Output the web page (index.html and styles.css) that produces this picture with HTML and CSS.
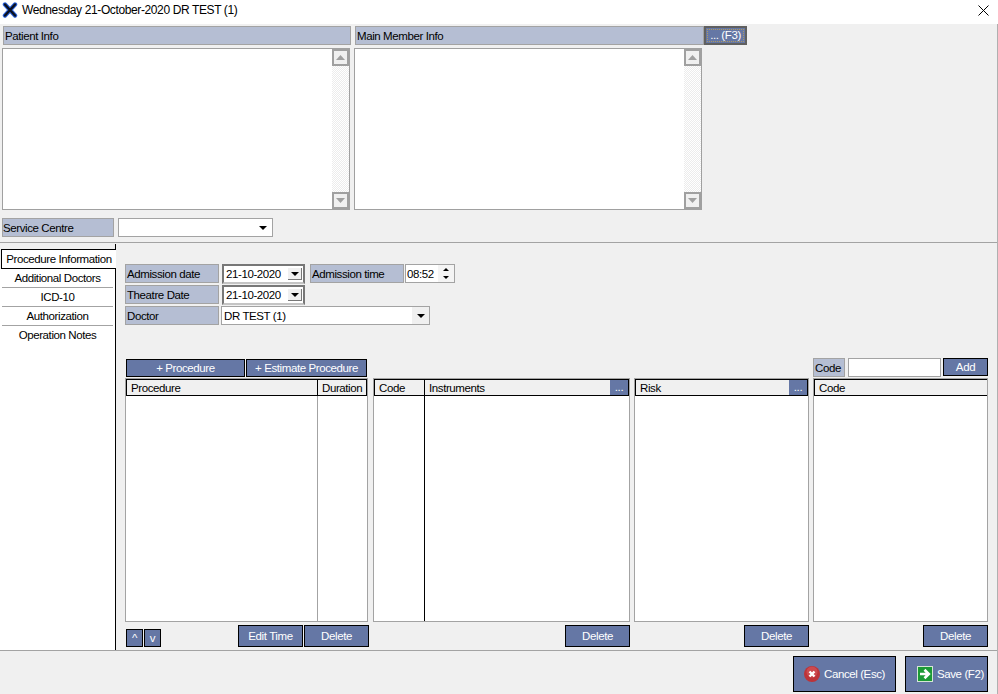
FILE: index.html
```html
<!DOCTYPE html>
<html>
<head>
<meta charset="utf-8">
<title>Wednesday 21-October-2020 DR TEST (1)</title>
<link rel="stylesheet" href="styles.css">
</head>
<body>
<div class="window">
  <header class="titlebar">
    <svg class="app-icon" width="16" height="16" viewBox="0 0 16 16"><path d="M3 2.5L13 13.5M13 2.5L3 13.5" stroke="#2a62d8" stroke-width="4.4" stroke-linecap="round"/><path d="M3 2.5L13 13.5M13 2.5L3 13.5" stroke="#0a1020" stroke-width="2.4" stroke-linecap="round"/></svg>
    <span class="title-text">Wednesday 21-October-2020 DR TEST (1)</span>
    <svg class="close-icon" width="11" height="11" viewBox="0 0 11 11"><path d="M.5.5L10.5 10.5M10.5.5L.5 10.5" stroke="#000" fill="none"/></svg>
  </header>

  <section class="info-heads">
    <div class="label info-head-a">Patient Info</div>
    <div class="label info-head-b">Main Member Info</div>
    <button class="btn btn-f3"><span class="focus">... (F3)</span></button>
  </section>
  <section class="info-boxes">
    <div class="memo">
      <div class="scrollbar">
        <span class="sb-btn"><svg width="9" height="5" viewBox="0 0 9 5"><path d="M4.5 0L9 5H0z" fill="#a0a0a0"/></svg></span>
        <span class="sb-track"></span>
        <span class="sb-btn"><svg width="9" height="5" viewBox="0 0 9 5"><path d="M0 0H9L4.5 5z" fill="#a0a0a0"/></svg></span>
      </div>
    </div>
    <div class="memo">
      <div class="scrollbar">
        <span class="sb-btn"><svg width="9" height="5" viewBox="0 0 9 5"><path d="M4.5 0L9 5H0z" fill="#a0a0a0"/></svg></span>
        <span class="sb-track"></span>
        <span class="sb-btn"><svg width="9" height="5" viewBox="0 0 9 5"><path d="M0 0H9L4.5 5z" fill="#a0a0a0"/></svg></span>
      </div>
    </div>
  </section>

  <section class="service-row">
    <div class="label service-label">Service Centre</div>
    <div class="combo service-combo"><span class="combo-text"></span><span class="arrow-cell"><i class="arrow"></i></span></div>
  </section>

  <main class="main">
    <nav class="tabs">
      <div class="tab tab-active">Procedure Information</div>
      <div class="tab-list">
        <div class="tab">Additional Doctors</div>
        <div class="tab">ICD-10</div>
        <div class="tab">Authorization</div>
        <div class="tab">Operation Notes</div>
      </div>
    </nav>

    <div class="content">
      <div class="form">
        <div class="form-row">
          <div class="label form-label">Admission date</div>
          <div class="date-field"><span class="date-text">21-10-2020</span><span class="date-btn"><i class="arrow"></i></span></div>
          <div class="label time-label">Admission time</div>
          <div class="time-field"><span class="time-text">08:52</span>
            <span class="spin"><i class="arrow-up"></i><i class="arrow-down"></i></span>
          </div>
        </div>
        <div class="form-row">
          <div class="label form-label">Theatre Date</div>
          <div class="date-field"><span class="date-text">21-10-2020</span><span class="date-btn"><i class="arrow"></i></span></div>
        </div>
        <div class="form-row">
          <div class="label form-label">Doctor</div>
          <div class="combo doctor-combo"><span class="combo-text">DR TEST (1)</span><span class="arrow-cell"><i class="arrow"></i></span></div>
        </div>
      </div>

      <div class="toolbar">
        <button class="btn btn-proc">+ Procedure</button>
        <button class="btn btn-est">+ Estimate Procedure</button>
        <div class="label code-label">Code</div>
        <div class="code-input"></div>
        <button class="btn btn-add">Add</button>
      </div>

      <div class="grids">
        <div class="grid grid-proc">
          <div class="grid-head">
            <div class="th th-proc">Procedure</div>
            <div class="th th-dur">Duration</div>
          </div>
          <div class="grid-body"><div class="col-line col-line-proc"></div></div>
        </div>
        <div class="grid grid-inst">
          <div class="grid-head">
            <div class="th th-code">Code</div>
            <div class="th th-fill">Instruments</div>
            <button class="btn-dots">...</button>
          </div>
          <div class="grid-body"><div class="col-line-dark"></div></div>
        </div>
        <div class="grid grid-risk">
          <div class="grid-head">
            <div class="th th-fill">Risk</div>
            <button class="btn-dots">...</button>
          </div>
          <div class="grid-body"></div>
        </div>
        <div class="grid grid-code">
          <div class="grid-head grid-head-open">
            <div class="th th-fill">Code</div>
          </div>
          <div class="grid-body"></div>
        </div>
      </div>

      <div class="grid-actions">
        <div class="group group-proc">
          <button class="btn btn-small btn-up">^</button>
          <button class="btn btn-small">v</button>
          <span class="spacer"></span>
          <button class="btn btn-action">Edit Time</button>
          <button class="btn btn-action">Delete</button>
        </div>
        <div class="group group-inst"><button class="btn btn-action">Delete</button></div>
        <div class="group group-risk"><button class="btn btn-action">Delete</button></div>
        <div class="group group-code"><button class="btn btn-action">Delete</button></div>
      </div>
    </div>
  </main>

  <footer class="footer">
    <button class="btn btn-foot btn-cancel">
      <svg width="16" height="16" viewBox="0 0 16 16"><circle cx="8" cy="8" r="8" fill="#bd3339"/><circle cx="8" cy="6" r="5.5" fill="#d65a5f" opacity=".6"/><path d="M5.5 5.5L10.5 10.5M10.5 5.5L5.5 10.5" stroke="#fff" stroke-width="2.4"/></svg>
      <span>Cancel (Esc)</span>
    </button>
    <button class="btn btn-foot btn-save">
      <svg width="16" height="16" viewBox="0 0 16 16"><rect x=".5" y=".5" width="15" height="15" fill="#1c9a35" stroke="#d5e6d5"/><path d="M3 8H10M7.5 3.8L11.8 8L7.5 12.2" stroke="#fff" stroke-width="2.6" fill="none"/></svg>
      <span>Save (F2)</span>
    </button>
  </footer>
</div>
</body>
</html>
```

FILE: styles.css
```css
* { box-sizing: border-box; }
html, body { margin: 0; padding: 0; }
body { width: 998px; height: 694px; overflow: hidden; font-family: "Liberation Sans", Arial, sans-serif; font-size: 11.5px; letter-spacing: -0.4px; color: #000; }
.window { width: 998px; height: 694px; display: flex; flex-direction: column; background: #f0f0f0; border-right: 1px solid #b0b0b0; }

.titlebar { height: 24px; flex: none; background: #fff; display: flex; align-items: flex-start; padding: 2px 0 0 2px; margin-right: -1px; }
.app-icon { flex: none; }
.title-text { margin-left: 4px; font-size: 12px; line-height: 16px; letter-spacing: -0.38px; }
.close-icon { margin-left: auto; margin-right: 9px; margin-top: 3px; }

.label { background: #b5bed3; border: 1px solid #a3a3a3; height: 19px; line-height: 18px; padding-left: 1px; white-space: nowrap; overflow: hidden; }

.btn { font: inherit; letter-spacing: inherit; background: #6577a5; color: #fff; border: 1px solid #000; padding: 0; margin: 0; height: 19px; line-height: 15px; text-align: center; }

.info-heads { display: flex; margin-top: 2px; padding-left: 3px; }
.info-head-a { width: 348px; }
.info-head-b { width: 349px; margin-left: 4px; }
.btn-f3 { width: 43px; border: 2px solid #606060; padding: 1px; }
.focus { display: block; height: 13px; line-height: 11px; border: 1px dotted #b09a60; }

.info-boxes { display: flex; gap: 4px; margin-top: 3px; padding-left: 2px; }
.memo { width: 348px; height: 162px; background: #fff; border: 1px solid #a0a0a0; display: flex; justify-content: flex-end; }
.scrollbar { width: 17px; display: flex; flex-direction: column; }
.sb-btn { height: 17px; flex: none; background: #f0f0f0; border: 2px solid #a0a0a0; display: flex; align-items: center; justify-content: center; }
.sb-track { flex: 1; background-color: #fff; background-image: repeating-conic-gradient(#ececec 0 25%, #fff 0 50%); background-size: 2px 2px; }

.service-row { display: flex; margin-top: 8px; padding-left: 2px; }
.service-label { width: 112px; padding-left: 0; }
.combo { height: 19px; background: #fff; border: 1px solid #a3a3a3; display: flex; align-items: center; }
.service-combo { width: 155px; margin-left: 4px; }
.combo-text { flex: 1; padding-left: 2px; }
.arrow-cell { width: 17px; height: 17px; background: #f0f0f0; display: flex; align-items: center; justify-content: center; }
.service-combo .arrow-cell { background: #fff; margin-right: 1px; }
.arrow { display: block; width: 0; height: 0; border-left: 4px solid transparent; border-right: 4px solid transparent; border-top: 4px solid #000; }
.arrow-up { display: block; width: 0; height: 0; border-left: 3px solid transparent; border-right: 3px solid transparent; border-bottom: 3px solid #000; }
.arrow-down { display: block; width: 0; height: 0; border-left: 3px solid transparent; border-right: 3px solid transparent; border-top: 3px solid #000; }

.main { flex: none; height: 409px; margin-top: 5px; border-top: 1px solid #a3a3a3; border-bottom: 1px solid #a3a3a3; display: flex; }
.tabs { width: 116px; flex: none; padding-top: 1px; display: flex; flex-direction: column; }
.tabs::before { content: ""; display: block; height: 5px; width: 1px; background: #000; margin-left: 115px; flex: none; }
.tab { height: 19px; line-height: 18px; text-align: center; white-space: nowrap; }
.tab-active { height: 20px; line-height: 19px; margin-left: 1px; background: #fff; border: 1px solid #000; border-right: none; padding-left: 0; flex: none; }
.tab-list { flex: 1; background: #fff; border-right: 1px solid #000; padding: 0 2px; }
.tab-list .tab { border-bottom: 1px solid #a3a3a3; }
.tab-list .tab:last-child { border-bottom: none; }

.content { flex: 1; padding-left: 9px; padding-top: 21px; min-width: 0; }
.form-row { display: flex; height: 21px; }
.form-label { width: 94px; }
.date-field { width: 83px; height: 20px; margin-left: 3px; background: #fff; border: 2px solid; border-color: #777 #777 #c4c4c4 #777; display: flex; align-items: center; }
.date-text { flex: 1; padding-left: 2px; }
.date-btn { width: 14px; height: 12px; margin-right: 1px; background: #f0f0f0; border-right: 1px solid #777; border-bottom: 1px solid #777; display: flex; align-items: center; justify-content: center; }
.time-label { width: 94px; margin-left: 5px; }
.time-field { width: 50px; height: 19px; margin-left: 1px; background: #fff; border: 1px solid #a3a3a3; display: flex; align-items: center; padding-left: 1px; }
.time-text { flex: 1; }
.spin { width: 16px; display: flex; flex-direction: column; align-items: center; gap: 5px; background: #f4f4f4; height: 17px; justify-content: center; }
.doctor-combo { width: 209px; margin-left: 2px; }

.toolbar { display: flex; align-items: flex-start; margin-top: 31px; height: 20px; padding-left: 1px; }
.btn-proc { width: 119px; margin-top: 1px; height: 18px; }
.btn-est { width: 121px; margin-left: 1px; margin-top: 1px; height: 18px; }
.code-label { width: 32px; margin-left: auto; }
.code-input { width: 93px; height: 19px; margin-left: 3px; background: #fff; border: 1px solid #a3a3a3; }
.btn-add { width: 45px; height: 18px; margin-left: 2px; margin-right: 9px; }

.grids { display: flex; height: 244px; }
.grid { background: #fff; border: 1px solid #a3a3a3; display: flex; flex-direction: column; }
.grid-proc { width: 243px; }
.grid-inst { width: 257px; margin-left: 5px; }
.grid-risk { width: 175px; margin-left: 4px; }
.grid-code { width: 175px; margin-left: 4px; }
.grid-head { height: 17px; flex: none; display: flex; background: #f0f0f0; border: 1px solid #000; }
.grid-head-open { border-right: none; }
.th { height: 15px; line-height: 16px; padding-left: 4px; border-right: 1px solid #000; white-space: nowrap; }
.th-proc { width: 191px; }
.th-dur { flex: 1; border-right: none; padding-left: 4px; }
.th-code { width: 50px; }
.th-fill { flex: 1; border-right: none; }
.btn-dots { width: 18px; height: 15px; padding: 0; border: 0; background: #6577a5; color: #fff; font: inherit; letter-spacing: inherit; line-height: 15px; }
.grid-body { flex: 1; }
.col-line { width: 1px; height: 100%; background: #a3a3a3; margin-left: 191px; }
.col-line-dark { width: 1px; height: 100%; background: #000; margin-left: 50px; }

.grid-actions { display: flex; margin-top: 2px; padding-left: 1px; }
.group { display: flex; align-items: flex-end; justify-content: flex-end; height: 23px; }
.group-proc { width: 243px; }
.group-inst { width: 261px; }
.group-risk { width: 179px; }
.group-code { width: 179px; }
.btn-small { width: 17px; height: 18px; line-height: 12px; }
.btn-up { margin-right: 1px; }
.spacer { flex: 1; }
.btn-action { width: 65px; height: 22px; line-height: 18px; }
.group-proc .btn-action:last-child { margin-left: 1px; }

.footer { flex: 1; display: flex; justify-content: flex-end; align-items: flex-start; padding-top: 5px; padding-right: 9px; }
.btn-foot { height: 36px; display: flex; align-items: center; gap: 4px; }
.btn-cancel { width: 103px; padding-left: 10px; }
.btn-save { width: 83px; margin-left: 9px; padding-left: 11px; }
```
